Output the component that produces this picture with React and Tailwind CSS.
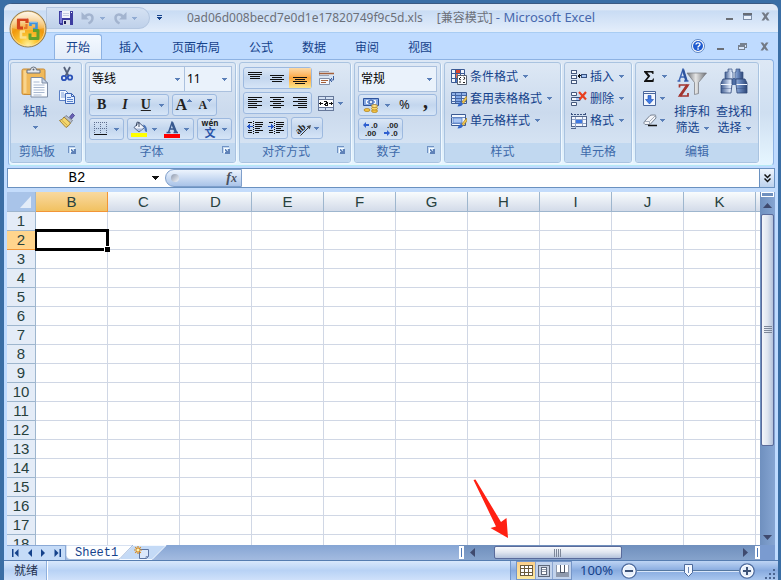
import React from "react";

const columns = ["B", "C", "D", "E", "F", "G", "H", "I", "J", "K"];
const rows = Array.from({ length: 18 }, (_, i) => i + 1);
const tabs = ["开始", "插入", "页面布局", "公式", "数据", "审阅", "视图"];

const Caret = ({ className = "" }) => (
  <svg className={"shrink-0 " + className} width="5" height="3" viewBox="0 0 5 3" shapeRendering="crispEdges">
    <path d="M0 0h5v1H4v1H3v1H2V2H1V1H0z" fill="#5a7fb8" />
  </svg>
);

/* ---------- title bar icons ---------- */

const OfficeLogo = () => (
  <svg width="38" height="38" viewBox="0 0 38 38">
    <defs>
      <radialGradient id="orb" cx="50%" cy="95%" r="90%">
        <stop offset="0" stopColor="#fff2a0" />
        <stop offset="0.25" stopColor="#fccb3c" />
        <stop offset="0.6" stopColor="#f0980c" />
        <stop offset="1" stopColor="#f6c878" />
      </radialGradient>
      <linearGradient id="gloss" x1="0" y1="0" x2="0" y2="1">
        <stop offset="0" stopColor="#fff" stopOpacity="0.8" />
        <stop offset="1" stopColor="#fff" stopOpacity="0.15" />
      </linearGradient>
    </defs>
    <circle cx="19" cy="19" r="18" fill="url(#orb)" stroke="#8a7a58" />
    <circle cx="19" cy="19" r="16.800" fill="none" stroke="#fbe2ac" strokeOpacity="0.800" />
    <path d="M3 18a16 16 0 0 1 32 0c-9 3-23 3-32 0z" fill="url(#gloss)" />
    <g fill="none" strokeLinejoin="round">
      <path d="M14 18H9.500V9.500h8.500V13" stroke="#d4441a" strokeWidth="3.200" />
      <path d="M17.500 14v4H15" stroke="#e9782a" strokeWidth="2.200" />
      <path d="M21.500 16v-3h6v6h-3.500" stroke="#3f93dc" strokeWidth="2.600" />
      <path d="M17.500 27.500h-5.500v-6h4" stroke="#fbe08a" strokeWidth="2.600" />
      <path d="M24 20.500h5v8h-8v-5" stroke="#62a02c" strokeWidth="3" />
    </g>
    <path d="M8.500 8.500h10M21 12.200h7" stroke="#fff" strokeOpacity="0.500" fill="none" />
  </svg>
);

const SaveIcon = () => (
  <svg width="14" height="14" viewBox="0 0 14 14" shapeRendering="crispEdges">
    <path d="M0 0h14v14H1l-1-1z" fill="#3d3da0" />
    <path d="M1 1h2v11H1z" fill="#7c7cd6" />
    <path d="M3 0h8v7H3z" fill="#f3f5fb" />
    <path d="M4 2h6v1H4zM4 4h6v1H4z" fill="#c6cde2" />
    <path d="M4 9h7v5H4z" fill="#d9deea" />
    <path d="M5 10h2v3H5z" fill="#22225e" />
    <path d="M12 1h1v1h-1z" fill="#fff" />
  </svg>
);

const UndoIcon = ({ flip = false }) => (
  <svg className={flip ? "-scale-x-100" : ""} width="14" height="14" viewBox="0 0 14 14" fill="none">
    <path d="M4 5.500c3-3 7.500-2.500 7.500 1.500 0 3-2 4.500-4 5.500" stroke="#a3b4cf" strokeWidth="2.500" />
    <path d="M0.500 1v7.500H8z" fill="#a3b4cf" />
  </svg>
);

const MinGlyph = () => (
  <svg width="9" height="9" viewBox="0 0 9 9" shapeRendering="crispEdges">
    <path d="M1 6h7v2H1z" fill="#6b6f76" />
  </svg>
);

const MaxGlyph = () => (
  <svg width="9" height="9" viewBox="0 0 9 9" shapeRendering="crispEdges">
    <path d="M0 1h9v7H0z" fill="#7d8ea8" />
    <path d="M0 1h9v2H0z" fill="#666b74" />
    <path d="M1 4h7v3H1z" fill="#e9f1fb" />
  </svg>
);

const RestoreGlyph = () => (
  <svg width="9" height="9" viewBox="0 0 9 9" shapeRendering="crispEdges">
    <path d="M2 1h7v5H7v2H0V3h2z" fill="#77818f" />
    <path d="M1 5h5v2H1zM7 3h1v2H7z" fill="#d6e5fa" />
  </svg>
);

const CloseGlyph = () => (
  <svg width="9" height="9" viewBox="0 0 9 9">
    <path d="M0.500 0.500h2.500l1.500 2 1.500-2h2.500L5.800 4.500l2.700 4H6l-1.500-2-1.500 2H0.500l2.700-4z" fill="#737a86" />
  </svg>
);

const HelpIcon = () => (
  <svg width="14" height="14" viewBox="0 0 14 14">
    <circle cx="7" cy="7" r="6.500" fill="#fff" stroke="#5d86c4" />
    <circle cx="7" cy="7" r="5" fill="#1f5bd0" />
    <path d="M5 5.600C5 3.300 9 3.300 9 5.500 9 7 7 6.800 7 8.400" fill="none" stroke="#fff" strokeWidth="1.400" />
    <path d="M6.300 9.300h1.500v1.400H6.300z" fill="#fff" />
  </svg>
);

/* ---------- ribbon icons ---------- */

const PasteIcon = () => (
  <svg width="28" height="32" viewBox="0 0 28 32">
    <path d="M1 4.500Q1 3 2.500 3h20Q24 3 24 4.500V27q0 1.500-1.500 1.500h-20Q1 28.500 1 27z" fill="#f0b95a" stroke="#c88a35" />
    <path d="M2.500 4.500h3V27h-3z" fill="#f9d48c" />
    <path d="M6 7V4h3.500q0-3 3-3t3 3H19v3z" fill="#e4e8ee" stroke="#69717d" />
    <circle cx="12.500" cy="3.500" r="1" fill="#555c68" />
    <path d="M10 11.500h11l5.500 5.500v14H10z" fill="#fbfdff" stroke="#7c8ca5" />
    <path d="M21 11.500V17h5.500z" fill="#c9d6ea" stroke="#7c8ca5" />
    <path d="M12.500 16h6M12.500 19h11M12.500 21.500h11M12.500 24h11M12.500 26.500h11M12.500 29h8" stroke="#a9b8d0" />
  </svg>
);

const CutIcon = () => (
  <svg width="16" height="16" viewBox="0 0 16 16" fill="none">
    <path d="M5 1l4.500 9M11 1L6.500 10" stroke="#55617a" strokeWidth="1.800" />
    <circle cx="5" cy="12" r="2.200" stroke="#2b52b8" strokeWidth="1.800" />
    <circle cx="11" cy="11.500" r="2.200" stroke="#2b52b8" strokeWidth="1.800" />
  </svg>
);

const CopyIcon = () => (
  <svg width="16" height="16" viewBox="0 0 16 16">
    <path d="M0.500 1.500h6l3 3v7h-9z" fill="#f2f7ff" stroke="#5a7fc6" />
    <path d="M2 4h3M2 6h5M2 8h5" stroke="#7f9fd8" />
    <path d="M6.500 4.500h6l3 3v7h-9z" fill="#e4eefe" stroke="#3c64b4" />
    <path d="M12.500 4.500v3h3" fill="none" stroke="#3c64b4" />
    <path d="M8 8.500h4M8 10.500h6M8 12.500h6" stroke="#5a83cc" />
  </svg>
);

const BrushIcon = () => (
  <svg width="16" height="16" viewBox="0 0 16 16">
    <path d="M10.500 5l3-3.500 2 2L12.500 7z" fill="#6a62b5" stroke="#3f3a86" strokeWidth="0.800" />
    <path d="M7 3.500l6.500 5-2 2.500-7-5z" fill="#b9bec9" stroke="#636a78" strokeWidth="0.700" />
    <path d="M5 5l6.500 6q-2 3.500-4.500 4.500L0.500 8.500Q3.500 8 5 5z" fill="#f4d76e" stroke="#8f6f22" strokeWidth="0.800" />
    <path d="M3 8.500l5.500 5" stroke="#c39a36" strokeWidth="0.800" />
  </svg>
);

const BorderIcon = () => (
  <svg width="14" height="14" viewBox="0 0 14 14" shapeRendering="crispEdges">
    <path d="M0 0.500h14M0 6.500h14M0.500 0v12M6.500 0v12M12.500 0v12" fill="none" stroke="#5f6f8e" strokeDasharray="1 1" />
    <path d="M0 12h13v1H0z" fill="#111" />
  </svg>
);

const FillIcon = () => (
  <svg width="17" height="16" viewBox="0 0 17 16">
    <path d="M3 6.500L8 1.500l5.500 5L8 11z" fill="#eef3fb" stroke="#4d5f80" />
    <path d="M5 7.500h7L8 10.500z" fill="#a9bcdc" />
    <path d="M8 6V1.500Q6 0 5.500 2.500V5" fill="none" stroke="#3d4a63" />
    <path d="M12 3.500q4.500 1 4 7.500-2.500 0-2.500-3.500z" fill="#4a74b8" />
    <path d="M0 12h16v4H0z" fill="#ffff00" />
  </svg>
);

const FontColorIcon = () => (
  <svg width="16" height="17" viewBox="0 0 16 17">
    <path d="M2.500 11.500h4M9.500 11.500h4.500M4.500 11.500L8 1.500l4 10M6 8h5" fill="none" stroke="#38598f" strokeWidth="1.500" />
    <path d="M8 1.500l4 10" stroke="#38598f" strokeWidth="2.500" />
    <path d="M0 13h16v4H0z" fill="#f00" />
  </svg>
);

const Lines = ({ d }) => (
  <svg width="16" height="14" viewBox="0 0 16 14" shapeRendering="crispEdges">
    <path d={d} stroke="#111" />
  </svg>
);

const WrapIcon = () => (
  <svg width="17" height="16" viewBox="0 0 17 16" fill="none">
    <path d="M1.500 1v4M1 1.500h10M1 5.500h10" stroke="#9aa5b8" />
    <path d="M1 3.500h15" stroke="#a5603a" strokeWidth="1.500" />
    <path d="M1.500 8.500h10v6h-10z" fill="#f5f8fd" stroke="#8391aa" />
    <path d="M3 10.500h7M3 12.500h5" stroke="#a5603a" />
    <path d="M15.500 6v4h-3M14 8l-2 2 2 2" stroke="#3c5f9f" />
  </svg>
);

const MergeIcon = () => (
  <svg width="16" height="15" viewBox="0 0 16 15" shapeRendering="crispEdges">
    <path d="M0 0h16v15H0z" fill="#66789a" />
    <path d="M1 1h6v2H1zM8 1h7v2H8zM1 12h6v2H1zM8 12h7v2H8z" fill="#d3e1f4" />
    <path d="M1 4h14v7H1z" fill="#fff" />
    <path d="M1 7h4v1H1zM2 6h1v3H2zM11 7h4v1h-4zM13 6h1v3h-1z" fill="#111" />
    <path d="M6 5h3v1h1v4H7V9H6V8h1V7h1V6H6z" fill="#111" />
    <path d="M8 8h1v1H8z" fill="#fff" />
  </svg>
);

const IndentIcon = ({ right = false }) => (
  <svg width="16" height="14" viewBox="0 0 16 14" shapeRendering="crispEdges">
    <path d="M1 1.500h4M8 1.500h8M8 3.500h8M8 5.500h7M8 7.500h5M1 9.500h4M8 9.500h8M8 11.500h4M1 11.500h4" stroke="#111" />
    <path d="M6.500 0v14" stroke="#111" strokeDasharray="1 1" />
    <path d={right ? "M0 5h3V3h1v1h1v1h1v1H5v1H4v1H3V6H0z" : "M6 5H3V3H2v1H1v1H0v1h1v1h1v1h1V6h3z"} fill="#2453c4" />
  </svg>
);

const OrientIcon = () => (
  <svg className="overflow-visible" width="17" height="15" viewBox="0 0 17 15">
    <path d="M5.500 14.500L14.500 5.500" stroke="#333" />
    <path d="M16 4l-4.500 1.200 3.300 3z" fill="#444" />
    <text x="1" y="11" fontSize="10" fontWeight="bold" fontFamily="Liberation Serif, serif" transform="rotate(-42 6 9)" fill="#222">
      ab
    </text>
  </svg>
);

const MoneyIcon = () => (
  <svg width="16" height="16" viewBox="0 0 16 16">
    <path d="M0.500 1.500h15v7h-15z" fill="#86a8e0" stroke="#2f549e" />
    <path d="M5 3.500H3.500v3H5M11 3.500h1.500v3H11" stroke="#fff" fill="none" />
    <circle cx="8" cy="5" r="2" fill="#dce8fa" stroke="#2f549e" />
    <ellipse cx="4" cy="13" rx="3" ry="1.500" fill="#f6c544" stroke="#a87a16" strokeWidth="0.700" />
    <ellipse cx="11.500" cy="14" rx="3" ry="1.500" fill="#f6c544" stroke="#a87a16" strokeWidth="0.700" />
    <ellipse cx="11.500" cy="11.500" rx="3" ry="1.500" fill="#fbd868" stroke="#a87a16" strokeWidth="0.700" />
    <ellipse cx="11.500" cy="9" rx="3" ry="1.500" fill="#fde28a" stroke="#a87a16" strokeWidth="0.700" />
  </svg>
);

const DecimalIcon = ({ less = false }) => (
  <svg width="16" height="16" viewBox="0 0 16 16" fontFamily="Liberation Sans, sans-serif" fontSize="8" fontWeight="bold" fill="#222">
    <text x={less ? 4 : 9} y="7">{less ? ".00" : ".0"}</text>
    <text x={less ? 8 : 3} y="15">{less ? ".0" : ".00"}</text>
    {less ? (
      <path d="M1 11h3V9l3 3-3 3v-2H1z" fill="#2f5fd0" />
    ) : (
      <path d="M7 3H4V1L1 4l3 3V5h3z" fill="#2f5fd0" />
    )}
  </svg>
);

const CondIcon = () => (
  <svg width="16" height="16" viewBox="0 0 16 16">
    <path d="M0.500 0.500h13v13h-13z" fill="#eef4fd" stroke="#3b5a94" />
    <path d="M4.500 0v13M9.500 0v13M0 4.500h13M0 9.500h13" stroke="#3b5a94" />
    <path d="M5 1h4v3H5z" fill="#d8452c" />
    <path d="M5 5h2v4H5z" fill="#e76a4a" />
    <path d="M5 10h3v3H5z" fill="#4a78cf" />
    <path d="M6.500 6.500h9v9h-9z" fill="#fff" stroke="#56606f" />
    <path d="M10 8L8 10l2 1M8 13h2M12.500 8l1.500 1-1.500 2M12 13.500h2" fill="none" stroke="#222" />
  </svg>
);

const TableFormatIcon = () => (
  <svg width="16" height="16" viewBox="0 0 16 16">
    <path d="M0.500 1.500h15v11h-15z" fill="#dce9fb" stroke="#3b5a94" />
    <path d="M1 2h14v2H1z" fill="#8fb0e6" />
    <path d="M5 5h5v7H5z" fill="#7ea5e6" />
    <path d="M0 4.500h15M0 7.500h15M0 10.500h15M4.500 2v10M10.500 2v10" stroke="#4566a4" />
    <path d="M15.500 5L10.500 11.500l1.500 1.500L16 8z" fill="#f1c64f" stroke="#94701d" strokeWidth="0.600" />
    <path d="M10.500 11q-2.500 0-4 4.500 5 0 5.500-3z" fill="#3568c8" />
  </svg>
);

const CellStyleIcon = () => (
  <svg width="16" height="16" viewBox="0 0 16 16">
    <path d="M0.500 1.500h14v11h-14z" fill="#f2f7fe" stroke="#3b5a94" />
    <path d="M0 4.500h14M0 10.500h14" stroke="#6f8dc2" />
    <path d="M2 5h9v5H2z" fill="#a8c5f3" stroke="#4f79c4" strokeWidth="0.700" />
    <path d="M15.500 5L10.500 11.500l1.500 1.500L16 8z" fill="#f1c64f" stroke="#94701d" strokeWidth="0.600" />
    <path d="M10.500 11q-2.500 0-4 4.500 5 0 5.500-3z" fill="#3568c8" />
  </svg>
);

const InsertIcon = () => (
  <svg width="16" height="16" viewBox="0 0 16 16" shapeRendering="crispEdges">
    <path d="M0.500 1.500h5v3h-5zM0.500 6.500h5v3h-5zM0.500 11.500h5v3h-5z" fill="#f6f9fe" stroke="#46597c" />
    <path d="M10.500 5.500h5v3h-5z" fill="#a9c6f4" stroke="#36507e" />
    <path d="M7 6h1V5h1v4H8V8H7z" fill="#111" />
    <path d="M7 6.500h3" stroke="#111" />
  </svg>
);

const DeleteIcon = () => (
  <svg width="16" height="16" viewBox="0 0 16 16">
    <path d="M0.500 1.500h5v3h-5zM0.500 6.500h5v3h-5zM0.500 11.500h5v3h-5z" fill="#f6f9fe" stroke="#46597c" />
    <path d="M5 6.500h4v3H5" fill="#a9c6f4" stroke="#36507e" />
    <path d="M8 1l7 7.500M15 1L8.500 8.500" stroke="#e8401f" strokeWidth="2.200" />
  </svg>
);

const FormatIcon = () => (
  <svg width="16" height="16" viewBox="0 0 16 16" shapeRendering="crispEdges">
    <path d="M0 1.500h15M0.500 0v3M14.500 0v3" stroke="#39507f" fill="none" strokeDasharray="2 1" />
    <path d="M0.500 3.500h15v10h-15z" fill="#f4f8fe" stroke="#50648c" />
    <path d="M4.500 4v12M11.500 4v9M1 6.500h14M1 10.500h14" stroke="#8ea1c6" />
    <path d="M5 7h6v3H5z" fill="#3f79e4" />
    <path d="M0 15.500h5" stroke="#50648c" />
  </svg>
);

const SigmaIcon = () => (
  <svg width="10" height="11" viewBox="0 0 10 11">
    <path d="M0 0h9.500v3H8.500Q8.300 1.500 7 1.500H3.300L6.300 5 3 9H7.500Q8.800 9 9 7.500h1L9.500 11H0V10L3.800 5.500 0 1z" fill="#111" />
  </svg>
);

const FillDownIcon = () => (
  <svg width="13" height="15" viewBox="0 0 13 15">
    <path d="M0.500 0.500h12v14h-12z" fill="#f3f7fe" stroke="#49669c" />
    <path d="M0 2.500h12" stroke="#49669c" />
    <path d="M5 4.500h3v4h2.500L6.500 13l-4-4.500H5z" fill="#3e7ae6" stroke="#1e4ca8" strokeWidth="0.600" />
  </svg>
);

const EraserIcon = () => (
  <svg width="14" height="13" viewBox="0 0 14 13">
    <path d="M1 8l6-6.500Q8 1 9 1h3.500L13 4l-6 6.500H2Q0.500 9.500 1 8z" fill="#f3f5f9" stroke="#7a8494" />
    <path d="M1.500 7.500h5L12.500 1.500M6.500 7.500v3" fill="none" stroke="#a4adbb" />
    <path d="M5 11.500h9" stroke="#111" strokeWidth="1.500" />
  </svg>
);

const SortIcon = () => (
  <svg width="30" height="30" viewBox="0 0 30 30">
    <defs>
      <linearGradient id="funnel" x1="0" x2="1" y1="0" y2="0">
        <stop offset="0" stopColor="#6f7277" />
        <stop offset="0.45" stopColor="#e6e6e6" />
        <stop offset="1" stopColor="#6c6f74" />
      </linearGradient>
    </defs>
    <path d="M10 5h19.500l-8 9.500v11l-4 1V14.500z" fill="url(#funnel)" stroke="#77797e" strokeWidth="0.700" />
    <path d="M0.500 13h3M7 13h4.500M2 13L6 1.500l3.500 11.500M3.500 9h5" fill="none" stroke="#3f67b5" strokeWidth="1.500" />
    <path d="M6 1.500l3.500 11.500" stroke="#2f559f" strokeWidth="2.500" />
    <path d="M2.500 19.500v-2.500h8.500L2.500 28h8.500v-3" fill="none" stroke="#a3352f" strokeWidth="1.700" />
    <path d="M10.500 17L3 28" stroke="#a3352f" strokeWidth="2.800" />
  </svg>
);

const FindIcon = () => (
  <svg width="28" height="26" viewBox="0 0 28 26">
    <defs>
      <linearGradient id="bino" x1="0" x2="1" y1="0" y2="0">
        <stop offset="0" stopColor="#3f5c90" />
        <stop offset="0.35" stopColor="#dde8fa" />
        <stop offset="0.7" stopColor="#6c8cc2" />
        <stop offset="1" stopColor="#2d4677" />
      </linearGradient>
    </defs>
    <path d="M11 10h6v7h-6z" fill="#4e6ea6" />
    <path d="M8 1h4v3h1v7H5V4h3zM16 1h4v3h3v7h-8V4h1z" fill="url(#bino)" stroke="#3b5484" strokeWidth="0.700" />
    <path d="M3 11h9v5l-1 9H1V15zM16 11h9l2 4v10H17l-1-9z" fill="url(#bino)" stroke="#2d4677" strokeWidth="0.800" />
    <path d="M1 16.500h10.500M16.500 16.500H27" stroke="#f0f5fd" />
    <path d="M1 20.500h10.500M16.500 20.500H27" stroke="#314c80" strokeOpacity="0.400" />
  </svg>
);

/* ---------- small building blocks ---------- */

const Launcher = () => (
  <button className="absolute right-[5px] top-[3px]" aria-label="更多">
    <svg width="8" height="8" viewBox="0 0 8 8" shapeRendering="crispEdges">
      <path d="M0 0h7v1H1v6H0z" fill="#7092c4" />
      <path d="M3 3h1v1h1v1h1V3h2v5H3V6h1V5H3z" fill="#5f82b8" />
      <path d="M2 2h5v1H3v4H2z" fill="#f5faff" />
    </svg>
  </button>
);

const Group = ({ label, width, launcher = false, children }) => (
  <section
    className={
      "flex shrink-0 flex-col overflow-hidden rounded-[3px] border border-[#a9c3e0] bg-linear-to-b from-[#dde8f5] via-[#cbdaed] to-[#dbe8f6] shadow-[1px_1px_0_#f0f8ff] " +
      width
    }
  >
    <div className="flex-1 px-[3px] pt-[3px]">{children}</div>
    <div
      className={
        "relative h-[19px] bg-[#c1d8f0] text-center leading-[18px] text-[#3e6aaa] " + (launcher ? "pr-[18px]" : "")
      }
    >
      {label}
      {launcher && <Launcher />}
    </div>
  </section>
);

const Box = ({ className = "", children }) => (
  <div
    className={
      "flex h-[22px] items-stretch rounded-[3px] border border-[#9db9df] bg-linear-to-b from-[#dbe7f6] via-[#c3d6ee] to-[#d6e5f7] " +
      className
    }
  >
    {children}
  </div>
);

const Tool = ({ label, className = "", children }) => (
  <button aria-label={label} className={"flex flex-1 items-center justify-center " + className}>
    {children}
  </button>
);

const Combo = ({ label, value, className = "" }) => (
  <label className={"relative block h-[26px] border border-[#abc1de] bg-[#eaf2fb] " + className}>
    <select aria-label={label} className="h-full w-full appearance-none pl-0.5 text-xs text-black outline-none">
      <option>{value}</option>
    </select>
    <Caret className="pointer-events-none absolute right-1 top-[11px]" />
  </label>
);

const MenuRow = ({ icon, text }) => (
  <button className="flex h-[21px] items-center gap-[3px] text-[#15428b]">
    {icon}
    <span>{text}</span>
    <Caret className="ml-0.5" />
  </button>
);

/* ---------- window parts ---------- */

const TitleBar = () => (
  <header className="flex h-[29px] shrink-0 items-center rounded-t-md border-b border-[#a9cdf3] bg-linear-to-b from-[#dfe9f6] from-20% via-[#c9dcf4] via-25% to-[#e4eefb]">
    <div className="ml-[42px] flex h-[22px] w-[104px] items-center rounded-r-full border border-[#b3c6e0] bg-linear-to-b from-[#d5e2f3] to-[#bfd1ea] pl-3">
      <button aria-label="保存">
        <SaveIcon />
      </button>
      <button aria-label="撤消" className="ml-2 flex items-center gap-[5px]">
        <UndoIcon />
        <Caret className="opacity-50" />
      </button>
      <button aria-label="恢复" className="ml-2 flex items-center gap-[5px]">
        <UndoIcon flip />
        <Caret className="opacity-50" />
      </button>
    </div>
    <button aria-label="自定义快速访问工具栏" className="ml-[7px]">
      <svg width="6" height="6" viewBox="0 0 6 6" shapeRendering="crispEdges">
        <path d="M0 0h5v1H0zM0 2h5v1H4v1H3v1H2V4H1V3H0z" fill="#15428b" />
      </svg>
    </button>
    <h1 className="ml-6 flex flex-1 items-center gap-3.5 whitespace-nowrap text-xs text-[#6c7079]">
      <span>0ad06d008becd7e0d1e17820749f9c5d.xls</span>
      <span>
        [兼容模式] <span className="text-[13px] text-[#4869ae]">- Microsoft Excel</span>
      </span>
    </h1>
    <div className="mb-1 mr-2 flex gap-[9px]">
      <button aria-label="最小化"><MinGlyph /></button>
      <button aria-label="最大化"><MaxGlyph /></button>
      <button aria-label="关闭"><CloseGlyph /></button>
    </div>
  </header>
);

const TabRow = () => (
  <nav className="flex h-[26px] shrink-0 items-end bg-[#bfdbff] pl-[50px] pr-[9px]">
    <div className="flex flex-1 gap-[5px]">
      {tabs.map((tab, i) => (
        <button
          key={tab}
          className={
            "h-[25px] rounded-t-[3px] border border-b-0 px-[11px] leading-[23px] text-[#15428b] " +
            (i === 0 ? "border-[#8db2e3] bg-linear-to-b from-[#f4f9ff] to-[#e3edf9]" : "border-transparent")
          }
        >
          {tab}
        </button>
      ))}
    </div>
    <div className="flex items-center gap-[13px] self-center">
      <button aria-label="帮助" className="-mr-0.5"><HelpIcon /></button>
      <button aria-label="最小化工作簿"><MinGlyph /></button>
      <button aria-label="还原工作簿"><RestoreGlyph /></button>
      <button aria-label="关闭工作簿"><CloseGlyph /></button>
    </div>
  </nav>
);

const Ribbon = () => (
  <div className="mx-1 flex h-[107px] shrink-0 gap-[3px] overflow-hidden rounded-[4px] border border-[#8db2e3] border-b-[#b5e9f5] bg-linear-to-b from-[#dde8f5] via-[#cfdff1] to-[#e6f6ff] px-px pb-0.5 pt-0.5 text-xs">
    <Group label="剪贴板" width="w-[72px]" launcher>
      <div className="flex justify-between pl-[7px] pr-[3px]">
        <button className="flex flex-col items-center text-[#15428b]">
          <PasteIcon />
          <span className="mt-1 leading-5">粘贴</span>
          <Caret className="mt-1" />
        </button>
        <div className="flex flex-col gap-[7px]">
          <button aria-label="剪切"><CutIcon /></button>
          <button aria-label="复制"><CopyIcon /></button>
          <button aria-label="格式刷"><BrushIcon /></button>
        </div>
      </div>
    </Group>

    <Group label="字体" width="w-[151px]" launcher>
      <div className="flex flex-col gap-0.5">
        <div className="flex">
          <Combo label="字体" value="等线" className="w-24" />
          <Combo label="字号" value="11" className="-ml-px flex-1" />
        </div>
        <div className="flex gap-[3px] font-['Liberation_Serif',serif] text-sm font-bold text-[#222]">
          <Box className="w-20">
            <Tool label="加粗">B</Tool>
            <Tool label="倾斜" className="italic">I</Tool>
            <Tool label="下划线" className="gap-2 px-1">
              <span className="underline">U</span>
              <Caret />
            </Tool>
          </Box>
          <Box className="w-[45px]">
            <Tool label="增大字号" className="text-base">
              A<Caret className="mb-2.5 rotate-180" />
            </Tool>
            <Tool label="减小字号" className="text-xs">
              A<Caret className="mb-2.5" />
            </Tool>
          </Box>
        </div>
        <div className="flex justify-between">
          <Box className="w-[35px]">
            <Tool label="边框" className="gap-1.5"><BorderIcon /><Caret /></Tool>
          </Box>
          <Box className="w-[67px]">
            <Tool label="填充颜色" className="gap-1"><FillIcon /><Caret /></Tool>
            <Tool label="字体颜色" className="gap-1"><FontColorIcon /><Caret /></Tool>
          </Box>
          <Box className="w-[35px]">
            <Tool label="拼音" className="gap-1">
              <span className="flex flex-col items-center">
                <span className="text-[8px] font-bold leading-[8px] text-[#222]">wén</span>
                <span className="text-[11px] font-bold leading-[12px] text-[#2a54a8]">文</span>
              </span>
              <Caret />
            </Tool>
          </Box>
        </div>
      </div>
    </Group>

    <Group label="对齐方式" width="w-[112px]" launcher>
      <div className="flex flex-col gap-[3px] pt-px">
        <div className="flex items-center gap-1.5">
          <Box className="w-[69px]">
            <Tool label="顶端对齐"><Lines d="M1 1.500h14M1 3.500h14M3 5.500h10M3 7.500h10" /></Tool>
            <Tool label="垂直居中"><Lines d="M1 4.500h14M3 6.500h10M1 8.500h14M3 10.500h10" /></Tool>
            <Tool label="底端对齐" className="bg-linear-to-b from-[#fbd9a6] via-[#fba63c] to-[#fde68a]">
              <Lines d="M1 6.500h14M3 8.500h10M1 10.500h14M3 12.500h10" />
            </Tool>
          </Box>
          <button aria-label="自动换行"><WrapIcon /></button>
        </div>
        <div className="flex items-center gap-1.5">
          <Box className="w-[69px]">
            <Tool label="左对齐"><Lines d="M1 1.500h14M1 3.500h9M1 5.500h14M1 7.500h9M1 9.500h14M1 11.500h9" /></Tool>
            <Tool label="居中"><Lines d="M1 1.500h14M4 3.500h8M1 5.500h14M4 7.500h8M1 9.500h14M4 11.500h8" /></Tool>
            <Tool label="右对齐"><Lines d="M1 1.500h14M6 3.500h9M1 5.500h14M6 7.500h9M1 9.500h14M6 11.500h9" /></Tool>
          </Box>
          <button aria-label="合并后居中" className="flex items-center gap-1"><MergeIcon /><Caret /></button>
        </div>
        <div className="flex gap-[3px]">
          <Box className="w-[45px]">
            <Tool label="减少缩进量"><IndentIcon /></Tool>
            <Tool label="增加缩进量"><IndentIcon right /></Tool>
          </Box>
          <Box className="w-8">
            <Tool label="方向" className="gap-0.5"><OrientIcon /><Caret /></Tool>
          </Box>
        </div>
      </div>
    </Group>

    <Group label="数字" width="w-[87px]" launcher>
      <div className="flex flex-col gap-0.5">
        <Combo label="数字格式" value="常规" />
        <Box>
          <Tool label="会计数字格式" className="gap-1.5 px-1"><MoneyIcon /><Caret /></Tool>
          <Tool label="百分比样式" className="text-[13px] text-[#222]">%</Tool>
          <Tool label="千位分隔样式" className="pb-2 font-['Liberation_Serif',serif] text-xl font-bold leading-3 text-[#222]">,</Tool>
        </Box>
        <Box className="w-[45px]">
          <Tool label="增加小数位数"><DecimalIcon /></Tool>
          <Tool label="减少小数位数"><DecimalIcon less /></Tool>
        </Box>
      </div>
    </Group>

    <Group label="样式" width="w-[117px]">
      <div className="flex flex-col items-start gap-px pl-[3px]">
        <MenuRow icon={<CondIcon />} text="条件格式" />
        <MenuRow icon={<TableFormatIcon />} text="套用表格格式" />
        <MenuRow icon={<CellStyleIcon />} text="单元格样式" />
      </div>
    </Group>

    <Group label="单元格" width="w-[68px]">
      <div className="flex flex-col items-start gap-px pl-[3px]">
        <MenuRow icon={<InsertIcon />} text="插入" />
        <MenuRow icon={<DeleteIcon />} text="删除" />
        <MenuRow icon={<FormatIcon />} text="格式" />
      </div>
    </Group>

    <Group label="编辑" width="w-[124px]">
      <div className="flex pl-1 text-[#15428b]">
        <div className="flex w-7 flex-col gap-px">
          <button aria-label="求和" className="flex h-[21px] items-center gap-2 pl-px"><SigmaIcon /><Caret /></button>
          <button aria-label="填充" className="flex h-[21px] items-center gap-1"><FillDownIcon /><Caret /></button>
          <button aria-label="清除" className="flex h-[21px] items-center gap-[3px]"><EraserIcon /><Caret /></button>
        </div>
        <button className="flex w-[42px] flex-col items-center pt-0.5 leading-4">
          <SortIcon />
          <span className="mt-1.5">排序和</span>
          <span className="flex items-center gap-1">筛选 <Caret /></span>
        </button>
        <button className="flex w-[42px] flex-col items-center pt-0.5 leading-4">
          <span className="h-[30px]"><FindIcon /></span>
          <span className="mt-1.5">查找和</span>
          <span className="flex items-center gap-1">选择 <Caret /></span>
        </button>
      </div>
    </Group>
  </div>
);

const FormulaBar = () => (
  <div className="mx-[3px] mt-0.5 flex h-5 shrink-0 border border-[#6a91c0] bg-white">
    <label className="relative flex w-[157px] items-center">
      <input
        aria-label="名称框"
        defaultValue="B2"
        className="w-[138px] bg-transparent text-center font-['Liberation_Mono',monospace] text-sm text-black outline-none"
      />
      <svg className="ml-1.5" width="7" height="4" viewBox="0 0 7 4" shapeRendering="crispEdges">
        <path d="M0 0h7v1H6v1H5v1H4v1H3V3H2V2H1V1H0z" fill="#111" />
      </svg>
    </label>
    <div className="flex w-[77px] items-center justify-between rounded-l-full border border-[#7f9fcb] bg-linear-to-b from-[#edf4fd] to-[#a9c3e8] pl-[5px] pr-1">
      <span className="size-2 rounded-full bg-linear-to-br from-[#8f9aae] to-[#f5f8fc]" />
      <button aria-label="插入函数" className="font-['Liberation_Serif',serif] text-sm font-bold italic leading-4 text-[#4a5160]">
        f<span className="text-xs">x</span>
      </button>
    </div>
    <input aria-label="编辑栏" className="min-w-0 flex-1 bg-white px-1 text-sm outline-none" />
    <button aria-label="展开编辑栏" className="flex w-[15px] items-center justify-center border-l border-[#6a91c0] bg-linear-to-b from-[#eef4fc] to-[#bdd2ee]">
      <svg width="7" height="9" viewBox="0 0 7 9" fill="none">
        <path d="M0.500 0.500l3 3 3-3M0.500 4.500l3 3 3-3" stroke="#111" strokeWidth="1.500" />
      </svg>
    </button>
  </div>
);

const Sheet = () => (
  <div className="relative min-w-0 flex-1 overflow-hidden bg-white">
    <table className="absolute left-0 top-0 w-full table-fixed border-separate border-spacing-0 font-['Liberation_Sans',sans-serif] text-[15px] leading-[18px] text-[#27413e]">
      <colgroup>
        <col className="w-[29px]" />
        {columns.map((c) => (
          <col key={c} className="w-[72px]" />
        ))}
        <col />
      </colgroup>
      <thead>
        <tr className="h-5">
          <th className="border-b border-r border-[#9eb6ce] bg-[#a9c4e9] p-0">
            <svg className="ml-auto mr-1" width="11" height="12" viewBox="0 0 11 12">
              <path d="M11 0v12H0z" fill="#e3ecf8" />
            </svg>
          </th>
          {columns.map((c) => (
            <th
              key={c}
              className={
                "border-b border-r p-0 font-normal " +
                (c === "B"
                  ? "border-[#f29536] bg-linear-to-b from-[#f9d99f] to-[#f1c15f]"
                  : "border-[#9eb6ce] bg-linear-to-b from-[#f9fcfd] to-[#d3dbe9]")
              }
            >
              {c}
            </th>
          ))}
          <th className="border-b border-[#9eb6ce] bg-linear-to-b from-[#f9fcfd] to-[#d3dbe9] p-0" />
        </tr>
      </thead>
      <tbody>
        {rows.map((r) => (
          <tr key={r} className="h-[19px]">
            <th
              className={
                "border-b border-r p-0 font-normal " +
                (r === 2 ? "border-[#f29536] bg-[#ffd58d]" : "border-[#9eb6ce] bg-[#e4ecf7]")
              }
            >
              {r}
            </th>
            {columns.map((c) => (
              <td key={c} className="relative border-b border-r border-[#d0d7e5] p-0">
                {r === 2 && c === "B" && (
                  <div className="absolute -inset-0.5 -left-px z-10 border-[3px] border-l-2 border-black">
                    <span className="absolute -bottom-1 -right-1 size-[6px] border-l border-t border-white bg-black" />
                  </div>
                )}
              </td>
            ))}
            <td className="border-b border-[#d0d7e5] p-0" />
          </tr>
        ))}
      </tbody>
    </table>
  </div>
);

const VerticalScroll = () => (
  <div className="flex w-[15px] shrink-0 flex-col items-center bg-linear-to-r from-[#6f90bf] to-[#86a5d2]">
    <span className="h-[5px] w-[13px] border border-white bg-[#6f90bf]" />
    <button aria-label="向上滚动" className="flex h-[17px] items-center">
      <svg width="9" height="5" viewBox="0 0 9 5"><path d="M4.500 0L9 5H0z" fill="#3f4a6e" /></svg>
    </button>
    <div className="flex w-[13px] flex-[232] flex-col items-center justify-center gap-px rounded-[2px] border border-[#5a6b9b] bg-linear-to-r from-[#f4f6fa] via-[#dfe5ef] to-[#b4c3dc]">
      <span className="h-px w-2 bg-[#7d8799]" />
      <span className="h-px w-2 bg-[#7d8799]" />
      <span className="h-px w-2 bg-[#7d8799]" />
      <span className="h-px w-2 bg-[#7d8799]" />
    </div>
    <div className="flex-[84]" />
    <button aria-label="向下滚动" className="flex h-4 items-center">
      <svg width="9" height="5" viewBox="0 0 9 5"><path d="M4.500 5L9 0H0z" fill="#3f4a6e" /></svg>
    </button>
  </div>
);

const NavButton = ({ label, d }) => (
  <button aria-label={label} className="flex w-[14px] items-center justify-center">
    <svg width="7" height="8" viewBox="0 0 7 8"><path d={d} fill="#15428b" /></svg>
  </button>
);

const SheetTabs = () => (
  <div className="flex min-w-0 flex-[3] items-stretch bg-linear-to-b from-[#86a5d4] to-[#a3bbe0]">
    <div className="flex w-[59px] shrink-0 border-r border-t border-[#8aa9d6] bg-[#c5dbf7] pl-px">
      <NavButton label="第一张" d="M0 0h1.500v8H0zM6.500 0v8l-4-4z" />
      <NavButton label="上一张" d="M6 0v8L2 4z" />
      <NavButton label="下一张" d="M1 0v8l4-4z" />
      <NavButton label="最后一张" d="M5.500 0H7v8H5.500zM0.500 0v8l4-4z" />
    </div>
    <div className="relative flex w-[102px] shrink-0">
      <svg className="absolute inset-0" width="102" height="15" viewBox="0 0 102 15">
        <path d="M53 14.500L67 0.500h33L86 14.500z" fill="#c4daf6" stroke="#f3f8ff" />
        <path d="M0 0h67L54 13.500Q53 14.500 51 14.500H4Q1 14.500 0 11z" fill="#fdfeff" stroke="#91acd6" strokeWidth="0.700" />
      </svg>
      <button className="relative pl-[9px] pt-0.5 font-['Liberation_Mono',monospace] text-xs leading-[13px] text-[#15428b]">Sheet1</button>
      <button aria-label="插入工作表" className="relative ml-4">
        <svg width="17" height="14" viewBox="0 0 17 14">
          <path d="M5.500 3.500h9v7l-2 2h-7z" fill="#dbe8fa" stroke="#5b74a2" />
          <path d="M14 10.500h-2v2z" fill="#fff" stroke="#5b74a2" strokeWidth="0.700" />
          <path d="M4 0v8M0 4h8M1.200 1.200l5.600 5.600M6.800 1.200L1.200 6.800" stroke="#d98a1e" strokeWidth="1.200" />
          <circle cx="4" cy="4" r="1.500" fill="#fff3b0" />
        </svg>
      </button>
    </div>
  </div>
);

const SplitHandle = () => (
  <span className="flex h-[13px] w-[5px] justify-center bg-white py-0.5">
    <span className="w-px bg-[#4f78b6]" />
  </span>
);

const HorizontalScroll = () => (
  <div className="flex min-w-0 flex-[2] items-center bg-linear-to-b from-[#6f8fbd] to-[#86a3cc]">
    <SplitHandle />
    <button aria-label="向左滚动" className="flex w-[30px] pl-1.5">
      <svg width="5" height="9" viewBox="0 0 5 9"><path d="M5 0v9L0 4.500z" fill="#3f4a6e" /></svg>
    </button>
    <div className="flex h-[13px] flex-[127] items-center justify-center gap-px rounded-[2px] border border-[#5a6b9b] bg-linear-to-b from-[#fafbfd] via-[#dfe5ef] to-[#b4c3dc]">
      <span className="h-2 w-px bg-[#7d8799]" />
      <span className="h-2 w-px bg-[#7d8799]" />
      <span className="h-2 w-px bg-[#7d8799]" />
      <span className="h-2 w-px bg-[#7d8799]" />
    </div>
    <div className="flex-[118]" />
    <button aria-label="向右滚动" className="flex w-4 pl-1">
      <svg width="5" height="9" viewBox="0 0 5 9"><path d="M0 0v9l5-4.500z" fill="#3f4a6e" /></svg>
    </button>
    <SplitHandle />
  </div>
);

const ZoomButton = ({ label, d }) => (
  <button aria-label={label}>
    <svg width="16" height="16" viewBox="0 0 16 16">
      <circle cx="8" cy="8" r="7.200" fill="#e6effb" stroke="#4d6a9c" strokeWidth="1.300" />
      <circle cx="8" cy="8" r="5.800" fill="none" stroke="#fff" />
      <path d={d} fill="#3d5276" />
    </svg>
  </button>
);

const StatusBar = () => (
  <footer className="flex h-5 shrink-0 items-stretch border-t border-[#567db1] bg-linear-to-b from-[#d9e8fc] via-[#b8d2f5] to-[#cfe1fa] text-xs leading-[19px] text-[#15428b]">
    <span className="w-[43px] border-r border-[#8fb0de] pl-2.5 text-[#222e4a]">就绪</span>
    <div className="flex-1 border-l border-white" />
    <div className="flex w-[268px] items-center border-l border-[#7599cc] bg-linear-to-b from-[#bdd4f4] via-[#88abdf] to-[#a9c6ee] pl-[5px]">
      <div className="flex h-[19px] items-stretch border border-[#7595c7] bg-[#c2d3ec]">
        <button aria-label="普通" className="flex w-[18px] items-center justify-center bg-linear-to-b from-[#fbd08a] to-[#fdeaa0]">
          <svg width="13" height="12" viewBox="0 0 13 12" shapeRendering="crispEdges">
            <path d="M0.500 0.500h12v10h-12zM4.500 0v11M8.500 0v11M0 3.500h13M0 7.500h13" fill="#fff" stroke="#6b5c3c" />
          </svg>
        </button>
        <button aria-label="页面布局视图" className="flex w-[18px] items-center justify-center border-x border-[#8ba6d0]">
          <svg width="12" height="12" viewBox="0 0 12 12" shapeRendering="crispEdges">
            <path d="M0 0h12v12H0z" fill="#5e6879" />
            <path d="M1 1h10v10H1z" fill="#c5cede" />
            <path d="M3.500 2.500h5v7h-5z" fill="#fff" stroke="#5e6879" />
            <path d="M4 4.500h4M4 6.500h4" stroke="#8d96a6" />
          </svg>
        </button>
        <button aria-label="分页预览" className="flex w-[18px] items-center justify-center">
          <svg width="13" height="12" viewBox="0 0 13 12" shapeRendering="crispEdges">
            <path d="M0 0h13v12H0z" fill="#8f9aad" />
            <path d="M1 0h3v7H1zM5 0h3v7H5zM9 0h3v7H9z" fill="#fff" />
            <path d="M4.500 0v7.500h4V0" fill="none" stroke="#4f596b" />
          </svg>
        </button>
      </div>
      <button className="ml-2 w-[41px] text-left text-[13px]">100%</button>
      <ZoomButton label="缩小" d="M4 7h8v2H4z" />
      <div className="relative flex h-4 w-[102px] items-center justify-center">
        <span className="absolute inset-x-0 top-[7px] h-0.5 border-t border-[#55779f] bg-[#d8e6f9]" />
        <svg className="relative" width="9" height="13" viewBox="0 0 9 13">
          <path d="M0.500 0.500h8v8l-4 4-4-4z" fill="#f3f8ff" stroke="#4d6a9c" />
          <path d="M4.500 3v6" stroke="#6c87b5" />
        </svg>
        <input type="range" aria-label="显示比例" defaultValue="50" className="absolute inset-0 w-full opacity-0" />
      </div>
      <ZoomButton label="放大" d="M7 4h2v3h3v2H9v3H7V9H4V7h3z" />
      <svg className="ml-auto mr-0.5 self-end" width="11" height="11" viewBox="0 0 11 11" shapeRendering="crispEdges">
        <path d="M8 0h2v2H8zM4 4h2v2H4zM8 4h2v2H8zM0 8h2v2H0zM4 8h2v2H4zM8 8h2v2H8z" fill="#4a6591" />
      </svg>
    </div>
  </footer>
);

const App = () => {
  return (
    <div className="flex h-screen w-full flex-col overflow-hidden bg-[#3a6ea5] pl-1 pr-[3px] pt-[3px] font-['Noto_Sans','Noto_Sans_CJK_SC',sans-serif] text-xs">
      <div className="relative flex min-h-0 flex-1 flex-col rounded-t-lg border-t border-[#3b5a82] bg-[#bfdbff]">
        <TitleBar />
        <TabRow />
        <Ribbon />
        <FormulaBar />
        <div className="mx-[3px] flex min-h-0 flex-1 flex-col border-t-4 border-[#c4dcfb]">
          <div className="flex min-h-0 flex-1">
            <Sheet />
            <VerticalScroll />
          </div>
          <div className="flex h-[15px] shrink-0 bg-[#7a9bd0] pr-[15px]">
            <SheetTabs />
            <HorizontalScroll />
          </div>
        </div>
        <StatusBar />
        <button aria-label="Office 按钮" className="absolute left-[5px] top-1.5">
          <OfficeLogo />
        </button>
      </div>
      <svg className="pointer-events-none absolute left-[473px] top-[479px]" width="36" height="60" viewBox="0 0 36 60">
        <path d="M0.500 1l2-0.500L28 43l5.500-4L35 59 17.500 49l5.500-1.500z" fill="#ff2012" />
      </svg>
    </div>
  );
};

export default App;
